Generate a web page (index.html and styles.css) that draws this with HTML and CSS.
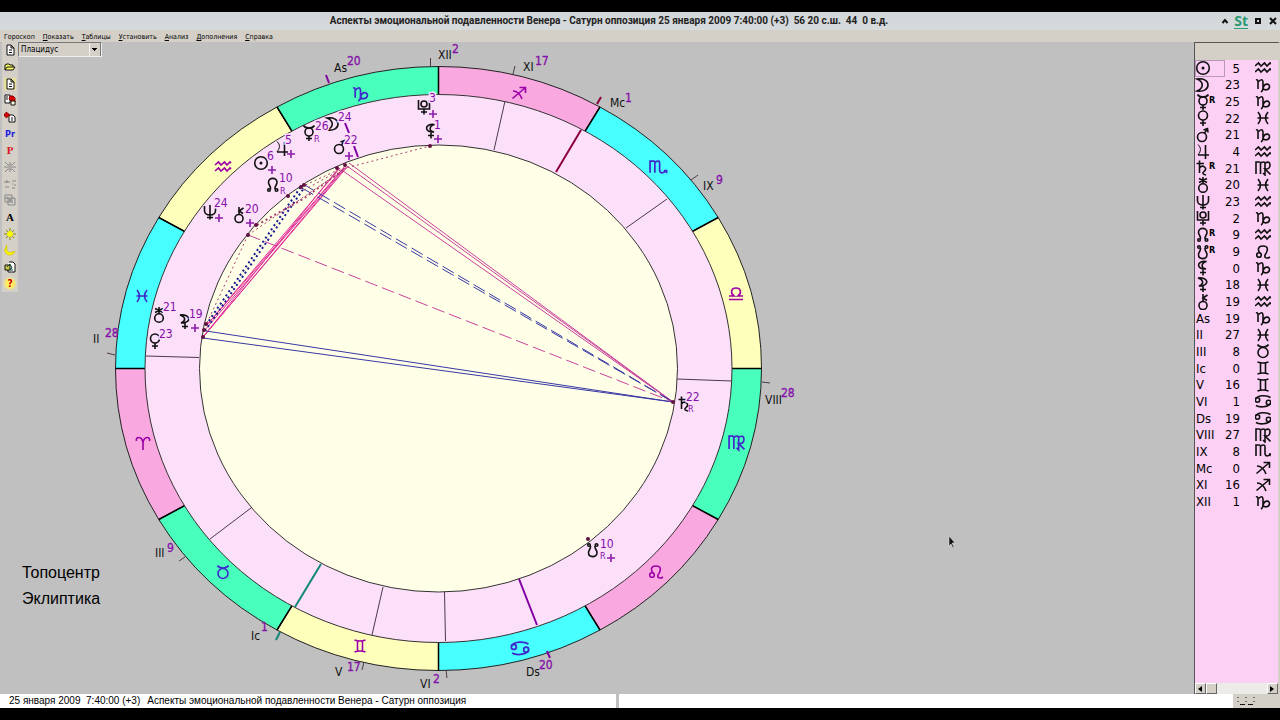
FILE: index.html
```html
<!DOCTYPE html>
<html lang="ru">
<head>
    <meta charset="UTF-8">
    <meta name="viewport" content="width=device-width, initial-scale=1.0">
    <title>Аспекты эмоциональной подавленности</title>
    <link rel="stylesheet" href="styles.css">
</head>
<body>

    <!-- glyph library -->
    <svg class="defs" width="0" height="0" aria-hidden="true">
        <symbol id="sun" viewBox="0 0 16 16"><circle cx="8" cy="8" r="6.3"/><circle cx="8" cy="8" r="0.7"/></symbol>
        <symbol id="moon" viewBox="0 0 16 16"><path d="M2 2C9 1 13 4 13 8S9 15 2 14C9 11 9 5 2 2Z"/></symbol>
        <symbol id="mercury" viewBox="0 0 16 16"><circle cx="8" cy="7" r="4"/><path d="M2.500 0.500Q4 3 8 3T13.500 0.500M8 11V16M5 13.500H11"/></symbol>
        <symbol id="venus" viewBox="0 0 16 16"><circle cx="8" cy="5.500" r="4.500"/><path d="M8 10V16M5 13H11"/></symbol>
        <symbol id="mars" viewBox="0 0 16 16"><circle cx="7" cy="10" r="4.500"/><path d="M9.500 6L12 2.500M8.500 3L12.500 1.500L13 5.500"/></symbol>
        <symbol id="jupiter" viewBox="0 0 16 16"><path class="thin" d="M3 0.500Q8 5 3 11"/><path d="M3 11H14M10.500 1V15"/></symbol>
        <symbol id="saturn" viewBox="0 0 16 16"><path d="M1.500 3.500H9M4.500 0.500V13M4.500 8Q7 5 9.500 7T9 11.500T11 15"/></symbol>
        <symbol id="uranus" viewBox="0 0 16 16"><circle cx="8" cy="11" r="4.300"/><path d="M8 7V0M4 1.500L12 5.500M12 1.500L4 5.500"/></symbol>
        <symbol id="neptune" viewBox="0 0 16 16"><path d="M2.500 2V7Q3 11 8 11T13.500 7V2M8 1V15.500M5 13.500H11"/></symbol>
        <symbol id="pluto" viewBox="0 0 16 16"><circle cx="8" cy="5" r="3"/><path d="M2.500 1V10H13.500V1M8 10V15.500M5 13H11"/></symbol>
        <symbol id="node" viewBox="0 0 16 16"><path d="M5.500 12C6 9 3.500 8 3.500 5.500C3.500 0 12 0 12 5.500C12 8 9.500 9 10 12"/><circle cx="4" cy="13" r="1.300"/><circle cx="11.500" cy="13" r="1.300"/></symbol>
        <symbol id="snode" viewBox="0 0 16 16"><path d="M5.500 4C6 7 3.500 8 3.500 10.500C3.500 16 12 16 12 10.500C12 8 9.500 7 10 4"/><circle cx="4" cy="3" r="1.300"/><circle cx="11.500" cy="3" r="1.300"/></symbol>
        <symbol id="lilith" viewBox="0 0 16 16"><path d="M11.500 1.500C1 0 1 10 11 9C5.500 8 6 3 11.500 1.500ZM8 9V15.500M5 12.500H11"/></symbol>
        <symbol id="selena" viewBox="0 0 16 16"><path d="M3 1C14 0 15 9 4 9C9 7 9 3 3 1ZM8 9V15M5 12.500H11"/></symbol>
        <symbol id="chiron" viewBox="0 0 16 16"><circle cx="8" cy="11.500" r="4"/><path d="M8 7.500V0M12.500 1L8 4L12 6.500"/></symbol>
        <symbol id="aries" viewBox="0 0 16 16"><path d="M1.500 6C0 2 7 0 8 8V15M14.500 6C16 2 9 0 8 8"/></symbol>
        <symbol id="taurus" viewBox="0 0 16 16"><circle cx="8" cy="9.500" r="5"/><path d="M2.500 1.500Q4 4 8 4T13.500 1.500"/></symbol>
        <symbol id="gemini" viewBox="0 0 16 16"><path d="M2.500 2Q8 4 13.500 2M2.500 14Q8 12 13.500 14M5.500 3V13M10.500 3V13"/></symbol>
        <symbol id="cancer" viewBox="0 0 16 16"><circle cx="2.500" cy="7" r="2.200"/><circle cx="13.500" cy="9.500" r="2.200"/><path d="M0.500 6C3 2 12 2 15.500 4.500M15.500 10.500C13 14.500 4 14.500 1 12.500"/></symbol>
        <symbol id="leo" viewBox="0 0 16 16"><circle cx="4" cy="11" r="2.300"/><path d="M5 9C3 7 2 2 8 2S13 7 10 11C9 14 12 15 15 13"/></symbol>
        <symbol id="virgo" viewBox="0 0 16 16"><path d="M1 14V2H4.500Q5.500 2 5.500 4V14M5.500 3Q7 2 9 2Q10 2 10 4V15L8 13M10 3Q15 0.500 15 5T10 9L15.500 14.500"/></symbol>
        <symbol id="libra" viewBox="0 0 16 16"><path d="M1 10H6C2 7 3 2 8 2S14 7 10 10H15M1 13.500H15"/></symbol>
        <symbol id="scorpio" viewBox="0 0 16 16"><path d="M1 13V2H4.500Q5.500 2 5.500 4V13M5.500 3Q7 2 9 2Q10 2 10 4V11Q11 15 16.500 11M14 11H16.500V13.500"/></symbol>
        <symbol id="sagittarius" viewBox="0 0 16 16"><path d="M1.500 13.500L14.500 2.500M8.500 2.500H14.500V8M2 6Q8 6 11 14"/></symbol>
        <symbol id="capricorn" viewBox="0 0 16 16"><path d="M1 3Q3 2 3 5V12M3 5Q8 0 8 6V11Q8 14 6 15M8 11C10 5 15 7 14.500 10S9 14 8 11"/></symbol>
        <symbol id="aquarius" viewBox="0 0 16 16"><path d="M0 6L3.500 3L6 6L9.500 3L12 6L15 3L16 4M0 12L3.500 9L6 12L9.500 9L12 12L15 9L16 10"/></symbol>
        <symbol id="pisces" viewBox="0 0 16 16"><path d="M3 2Q8 8 3 14M13 2Q8 8 13 14M2.500 8H13.500"/></symbol>
        <symbol id="plus" viewBox="0 0 8 8"><path d="M0 4H8M4 0V8"/></symbol>
        <symbol id="page" viewBox="0 0 12 12"><path d="M3 1H7L10 4V11H3ZM7 1V4H10M5 6H8M5 8.500H8" fill="#fff"/></symbol>
    </svg>

    <header class="titlebar">
        <h1>Аспекты эмоциональной подавленности Венера - Сатурн оппозиция 25 января 2009 7:40:00 (+3)&nbsp; 56 20 с.ш.&nbsp; 44&nbsp; 0 в.д.</h1>
        <div class="window-buttons">
            <button aria-label="Свернуть"><svg viewBox="0 0 8 8"><path d="M1.500 6L4 3L6.500 6"/></svg></button>
            <span class="brand">St</span>
            <button aria-label="Развернуть"><svg viewBox="0 0 8 8"><path d="M2 2H6V6H2Z"/></svg></button>
            <button aria-label="Закрыть"><svg viewBox="0 0 8 8"><path d="M1 1L7 7M7 1L1 7"/></svg></button>
        </div>
    </header>

    <nav class="menu">
        <a href="#">Гороскоп</a>
        <a href="#"><u>П</u>оказать</a>
        <a href="#"><u>Т</u>аблицы</a>
        <a href="#"><u>У</u>становить</a>
        <a href="#"><u>А</u>нализ</a>
        <a href="#"><u>Д</u>ополнения</a>
        <a href="#"><u>С</u>правка</a>
    </nav>

    <main class="workspace">
        <div class="toolbar">
            <button aria-label="Новый"><svg viewBox="0 0 12 12"><use href="#page"/></svg></button>
            <button aria-label="Открыть"><svg viewBox="0 0 12 12"><path d="M1 9V4L3 3H5L6 4H9V6M1 9L3 6H11L9 9Z" fill="#ff6"/></svg></button>
            <button aria-label="Изменить"><svg class="lit" viewBox="0 0 12 12"><use href="#page"/></svg></button>
            <button aria-label="Сохранить"><svg viewBox="0 0 12 12"><path d="M1 1H6V9H1ZM2 3H4M2 5H4" fill="#fff"/><path d="M6 2H9L11 4V8H8L5 5Z" fill="#d00" stroke="#800"/><path d="M7 7H11V11H7Z" fill="#ffd"/></svg></button>
            <button aria-label="Импорт"><svg viewBox="0 0 12 12"><path d="M5 4H9L11 6V11H5ZM7 7H9M7 9H9" fill="#fff"/><path d="M0 3H2V1L6 4L2 7V5H0Z" fill="#d00" stroke="#900"/></svg></button>
            <button class="progress">Pr</button>
            <button class="transit">P</button>
            <button aria-label="Аспекты" disabled><svg viewBox="0 0 12 12"><path d="M0 6H12M6 1V4M6 8V11M1 1L4 4H8L11 1M1 11L4 8H8L11 11"/></svg></button>
            <button aria-label="Ряды" disabled><svg viewBox="0 0 12 12"><path d="M0 4H6M3 2V5M1 9H5M8 3H10M11 2V4M8 6H9M11 6V8M8 10H11"/></svg></button>
            <button aria-label="Копии" disabled><svg viewBox="0 0 12 12"><path d="M1 1H8V8H1ZM4 4H11V11H4ZM3 3L9 9M4 8L8 4M1 4H4"/></svg></button>
            <button class="letter">A</button>
            <button aria-label="Солнце"><svg viewBox="0 0 12 12"><path d="M6 0V12M0 6H12M2 2L10 10M10 2L2 10" stroke="#880"/><circle cx="6" cy="6" r="2.500" fill="#ff0" stroke="#ee0"/></svg></button>
            <button aria-label="Луна"><svg viewBox="0 0 12 12"><path d="M3 1C1 9 6 10 11 7C9 13 0 12 1 5Z" fill="#ff0" stroke="#dc0"/></svg></button>
            <button aria-label="Карта"><svg viewBox="0 0 12 12"><path d="M5 1H9L11 3V11H4V4" fill="#fff"/><path d="M1 4H6V9H1Z" fill="#cc4"/><path d="M3 6L6 3L8 7L5 9M6 9H9" stroke="#143"/></svg></button>
            <button class="help">?</button>
        </div>

        <div class="stage">
            <svg class="chart" viewBox="18 42 1176 652" preserveAspectRatio="xMinYMin meet" role="img" aria-label="Карта гороскопа">
                <g transform="translate(438.500 368.500)">
                    <g class="wheel">
                        <path class="fire" d="M0 0V-302A323 302 0 0 1 161.500 -261.500Z"/>
                        <path class="water" d="M0 0L161.500 -261.500A323 302 0 0 1 279.700 -151Z"/>
                        <path class="air" d="M0 0L279.700 -151A323 302 0 0 1 323 0Z"/>
                        <path class="earth" d="M0 0H323A323 302 0 0 1 279.700 151Z"/>
                        <path class="fire" d="M0 0L279.700 151A323 302 0 0 1 161.500 261.500Z"/>
                        <path class="water" d="M0 0L161.500 261.500A323 302 0 0 1 0 302Z"/>
                        <path class="air" d="M0 0V302A323 302 0 0 1 -161.500 261.500Z"/>
                        <path class="earth" d="M0 0L-161.500 261.500A323 302 0 0 1 -279.700 151Z"/>
                        <path class="fire" d="M0 0L-279.700 151A323 302 0 0 1 -323 0Z"/>
                        <path class="water" d="M0 0H-323A323 302 0 0 1 -279.700 -151Z"/>
                        <path class="air" d="M0 0L-279.700 -151A323 302 0 0 1 -161.500 -261.500Z"/>
                        <path class="earth" d="M0 0L-161.500 -261.500A323 302 0 0 1 0 -302Z"/>
                    </g>
                    <path class="spokes" d="M0 -302V302M-323 0H323M161.500 -261.500L-161.500 261.500M-161.500 -261.500L161.500 261.500M279.700 -151L-279.700 151M-279.700 -151L279.700 151"/>
                    <ellipse class="houses" rx="293.500" ry="274"/>
                    <ellipse class="core" rx="239" ry="223.500"/>
                </g>

                <!-- house cusps -->
                <path class="cusp" d="M430.500 58V66M515 66L513 74M505 101L494 150M698 175L691 180M667 199L626 228M762 382L770 383M677 379L732 381M444.500 592L445.500 641M446 670L447 678M383 587L372 635M364 662L362 670M251 508L210 539M185 557L179 561M146 356L199 357.500M107 353L115 355"/>
                <path class="axis mc" d="M601 97L597 104M581 130L556 172"/>
                <path class="axis ic" d="M321 564L295 607M280 632L276 640"/>
                <path class="axis asc" d="M326 75L329 83M345 123L349 133M354 146L358 157M519 579L537 625M547 651L550 658"/>

                <!-- aspects -->
                <g class="aspects">
                    <path class="hard" d="M349 163L673 402M347 166L673 402M343 171L673 402"/>
                    <path class="tight" d="M338 169L203 337M346 165L206 326M344 168L204 331M348 166L203 337M340 168L206 326M345 168L204 336"/>
                    <path class="soft" d="M206 331L673 402M203 338L673 402"/>
                    <path class="soft long" d="M303 184L673 402M302 188L673 402"/>
                    <path class="hard long" d="M248 235L673 402"/>
                    <path class="soft dots" d="M206 325L300 188M205 331L304 188"/>
                    <path class="minor bold" d="M257 225L303 199L346 168"/>
                    <path class="minor" d="M248 235L206 325M301 187L338 170M304 190L344 168M248 235L346 168L430 146"/>
                </g>
                <g class="points">
                    <circle cx="430" cy="146" r="2"/><circle cx="337" cy="168" r="2"/><circle cx="345" cy="165" r="2"/>
                    <circle cx="301" cy="187" r="2"/><circle cx="304" cy="185" r="2"/><circle cx="288" cy="196" r="2"/>
                    <circle cx="256" cy="225" r="2"/><circle cx="248" cy="235" r="2"/><circle cx="206" cy="324" r="2"/>
                    <circle cx="204" cy="330" r="2"/><circle cx="203" cy="337" r="2"/><circle cx="588" cy="539" r="2"/>
                    <circle cx="673" cy="402" r="2"/>
                </g>

                <!-- zodiac signs -->
                <g class="glyphs cool">
                    <use href="#capricorn" x="352" y="85" width="17" height="17"/>
                    <use href="#scorpio" x="649" y="159" width="17" height="17"/>
                    <use href="#virgo" x="728" y="434" width="17" height="17"/>
                    <use href="#cancer" x="511" y="639" width="18" height="18"/>
                    <use href="#taurus" x="215" y="564" width="16" height="16"/>
                    <use href="#pisces" x="134" y="288" width="16" height="16"/>
                </g>
                <g class="glyphs warm">
                    <use href="#sagittarius" x="511" y="85" width="16" height="16"/>
                    <use href="#libra" x="728" y="286" width="16" height="16"/>
                    <use href="#leo" x="648" y="564" width="16" height="16"/>
                    <use href="#gemini" x="352" y="638" width="16" height="16"/>
                    <use href="#aries" x="135" y="435" width="16" height="16"/>
                    <use href="#aquarius" x="215" y="159" width="16" height="16"/>
                </g>

                <!-- planets -->
                <g class="glyphs">
                    <use href="#moon" x="325" y="116" width="16" height="16"/>
                    <use href="#mercury" x="301" y="125" width="16" height="16"/>
                    <use href="#jupiter" x="274" y="141" width="16" height="16"/>
                    <use href="#sun" x="253" y="155" width="16" height="16"/>
                    <use href="#mars" x="332" y="139" width="16" height="16"/>
                    <use href="#node" x="265" y="177" width="16" height="16"/>
                    <use href="#neptune" x="202" y="204" width="16" height="16"/>
                    <use href="#chiron" x="231" y="207" width="16" height="16"/>
                    <use href="#uranus" x="151" y="307" width="16" height="16"/>
                    <use href="#selena" x="177" y="314" width="16" height="16"/>
                    <use href="#venus" x="147" y="333" width="16" height="16"/>
                    <use href="#pluto" x="416" y="99" width="16" height="16"/>
                    <use href="#lilith" x="423" y="123" width="16" height="16"/>
                    <use href="#saturn" x="677" y="396" width="16" height="16"/>
                    <use href="#snode" x="585" y="542" width="16" height="16"/>
                </g>
                <g class="glyphs marks">
                    <use href="#plus" x="287" y="150" width="8" height="8"/>
                    <use href="#plus" x="268" y="166" width="8" height="8"/>
                    <use href="#plus" x="345" y="152" width="8" height="8"/>
                    <use href="#plus" x="215" y="214" width="8" height="8"/>
                    <use href="#plus" x="246" y="219" width="8" height="8"/>
                    <use href="#plus" x="191" y="324" width="8" height="8"/>
                    <use href="#plus" x="429" y="110" width="8" height="8"/>
                    <use href="#plus" x="434" y="135" width="8" height="8"/>
                    <use href="#plus" x="607" y="554" width="8" height="8"/>
                </g>
                <g class="degrees halo">
                    <text x="338" y="121">24</text><text x="315" y="130">26</text><text x="285" y="144">5</text>
                    <text x="267" y="160">6</text><text x="344" y="144">22</text><text x="279" y="182">10</text>
                    <text x="214" y="207">24</text><text x="245" y="213">20</text><text x="163" y="311">21</text>
                    <text x="189" y="318">19</text><text x="159" y="338">23</text><text x="429" y="102">3</text>
                    <text x="434" y="129">1</text><text x="686" y="401">22</text><text x="600" y="548">10</text>
                </g>
                <g class="retro">
                    <text x="314" y="142">R</text><text x="280" y="194">R</text>
                    <text x="688" y="412">R</text><text x="600" y="559">R</text>
                </g>
                <g class="labels">
                    <text x="334" y="72">As</text><text x="438" y="59">XII</text><text x="523" y="71">XI</text>
                    <text x="610" y="107">Mc</text><text x="703" y="190">IX</text><text x="765" y="404">VIII</text>
                    <text x="526" y="676">Ds</text><text x="420" y="688">VI</text><text x="335" y="676">V</text>
                    <text x="251" y="640">Ic</text><text x="155" y="557">III</text><text x="93" y="343">II</text>
                </g>
                <g class="degrees outer">
                    <text x="347" y="65">20</text><text x="452" y="53">2</text><text x="535" y="65">17</text>
                    <text x="625" y="102">1</text><text x="716" y="184">9</text><text x="781" y="397">28</text>
                    <text x="539" y="669">20</text><text x="433" y="683">2</text><text x="347" y="671">17</text>
                    <text x="261" y="631">1</text><text x="167" y="552">9</text><text x="105" y="337">28</text>
                </g>

                <path class="cursor" d="M949 536V546L951 544L953 548L954 547L952 543H955Z"/>
            </svg>

            <select class="system" aria-label="Система домов">
                <option>Плацидус</option>
            </select>

            <div class="notes">
                <p>Топоцентр</p>
                <p>Эклиптика</p>
            </div>
        </div>

        <aside class="positions">
            <table>
                <tr><td class="current"><svg><use href="#sun"/></svg></td><td>5</td><td><svg><use href="#aquarius"/></svg></td></tr>
                <tr><td><svg><use href="#moon"/></svg></td><td>23</td><td><svg><use href="#capricorn"/></svg></td></tr>
                <tr><td><svg><use href="#mercury"/></svg><b>R</b></td><td>25</td><td><svg><use href="#capricorn"/></svg></td></tr>
                <tr><td><svg><use href="#venus"/></svg></td><td>22</td><td><svg><use href="#pisces"/></svg></td></tr>
                <tr><td><svg><use href="#mars"/></svg></td><td>21</td><td><svg><use href="#capricorn"/></svg></td></tr>
                <tr><td><svg><use href="#jupiter"/></svg></td><td>4</td><td><svg><use href="#aquarius"/></svg></td></tr>
                <tr><td><svg><use href="#saturn"/></svg><b>R</b></td><td>21</td><td><svg><use href="#virgo"/></svg></td></tr>
                <tr><td><svg><use href="#uranus"/></svg></td><td>20</td><td><svg><use href="#pisces"/></svg></td></tr>
                <tr><td><svg><use href="#neptune"/></svg></td><td>23</td><td><svg><use href="#aquarius"/></svg></td></tr>
                <tr><td><svg><use href="#pluto"/></svg></td><td>2</td><td><svg><use href="#capricorn"/></svg></td></tr>
                <tr><td><svg><use href="#node"/></svg><b>R</b></td><td>9</td><td><svg><use href="#aquarius"/></svg></td></tr>
                <tr><td><svg><use href="#snode"/></svg><b>R</b></td><td>9</td><td><svg><use href="#leo"/></svg></td></tr>
                <tr><td><svg><use href="#lilith"/></svg></td><td>0</td><td><svg><use href="#capricorn"/></svg></td></tr>
                <tr><td><svg><use href="#selena"/></svg></td><td>18</td><td><svg><use href="#pisces"/></svg></td></tr>
                <tr><td><svg><use href="#chiron"/></svg></td><td>19</td><td><svg><use href="#aquarius"/></svg></td></tr>
                <tr><td>As</td><td>19</td><td><svg><use href="#capricorn"/></svg></td></tr>
                <tr><td>II</td><td>27</td><td><svg><use href="#pisces"/></svg></td></tr>
                <tr><td>III</td><td>8</td><td><svg><use href="#taurus"/></svg></td></tr>
                <tr><td>Ic</td><td>0</td><td><svg><use href="#gemini"/></svg></td></tr>
                <tr><td>V</td><td>16</td><td><svg><use href="#gemini"/></svg></td></tr>
                <tr><td>VI</td><td>1</td><td><svg><use href="#cancer"/></svg></td></tr>
                <tr><td>Ds</td><td>19</td><td><svg><use href="#cancer"/></svg></td></tr>
                <tr><td>VIII</td><td>27</td><td><svg><use href="#virgo"/></svg></td></tr>
                <tr><td>IX</td><td>8</td><td><svg><use href="#scorpio"/></svg></td></tr>
                <tr><td>Mc</td><td>0</td><td><svg><use href="#sagittarius"/></svg></td></tr>
                <tr><td>XI</td><td>16</td><td><svg><use href="#sagittarius"/></svg></td></tr>
                <tr><td>XII</td><td>1</td><td><svg><use href="#capricorn"/></svg></td></tr>
            </table>
            <div class="scrollbar">
                <button aria-label="Влево"><svg viewBox="0 0 8 8"><path d="M6 1V7L2 4Z"/></svg></button>
                <span class="thumb"></span>
                <button class="right" aria-label="Вправо"><svg viewBox="0 0 8 8"><path d="M2 1V7L6 4Z"/></svg></button>
            </div>
        </aside>
    </main>

    <footer class="status">
        <span>25 января 2009&nbsp; 7:40:00 (+3)</span>
        <span>Аспекты эмоциональной подавленности Венера - Сатурн оппозиция</span>
        <span class="indicator"><svg viewBox="0 0 18 10"><path d="M1 1V2M9 1V2M17 1V2M1 5V6M9 5V6M17 5V6M3 8.500H8M11 8.500H16"/></svg></span>
    </footer>

</body>
</html>
```
FILE: styles.css
```css
* {
    box-sizing: border-box;
}
body {
    margin: 0;
    height: 100vh;
    padding: 12px 0;
    display: flex;
    flex-direction: column;
    background: #000;
    font-family: "DejaVu Sans Condensed", "DejaVu Sans", sans-serif;
    color: #000;
}
button {
    padding: 0;
    border: none;
    background: none;
    font-family: inherit;
}
svg {
    display: block;
    fill: none;
    stroke: #111;
}
symbol {
    overflow: visible;
}
.defs {
    position: absolute;
}

/* title and menu */
.titlebar {
    position: relative;
    height: 18px;
    background: linear-gradient(#cfd5d8, #d8dbdc);
    display: flex;
    align-items: center;
    justify-content: center;
    flex-shrink: 0;
}
.titlebar h1 {
    margin: 0 62px 0 0;
    font: bold 10px/18px Roboto, sans-serif;
    color: #222;
    white-space: nowrap;
}
.window-buttons {
    position: absolute;
    right: 2px;
    top: 0;
    height: 18px;
    display: flex;
    align-items: center;
    gap: 4px;
}
.window-buttons button {
    width: 11px;
}
.window-buttons svg {
    width: 8px;
    height: 8px;
    margin: 0 auto;
    stroke-width: 2;
}
.brand {
    font: bold 14px/14px "Noto Sans", sans-serif;
    color: #2a9a70;
    border-bottom: 1px solid #2a9a70;
}
.menu {
    height: 12px;
    padding-left: 4px;
    background: #d4d0c8;
    display: flex;
    gap: 8px;
    flex-shrink: 0;
}
.menu a {
    font-size: 7px;
    line-height: 14px;
    color: #000;
    text-decoration: none;
}

/* workspace */
.workspace {
    flex: 1;
    min-height: 0;
    display: grid;
    grid-template-columns: 18px 1fr 86px;
    background: #c0c0c0;
}
.toolbar {
    height: 250px;
    border-left: 2px solid #c0c0c0;
    background: #d4d0c8;
    display: flex;
    flex-direction: column;
}
.toolbar button {
    flex: 1;
    display: flex;
    align-items: center;
    justify-content: center;
    font-size: 10px;
    line-height: 12px;
}
.toolbar svg {
    width: 12px;
    height: 12px;
}
.toolbar .lit {
    background: #e6e29a;
}
.toolbar button:disabled svg {
    stroke: #888;
}
.toolbar .progress {
    color: #22d;
    font-weight: bold;
    font-size: 9px;
}
.toolbar .transit,
.toolbar .letter {
    font-family: "Liberation Serif", serif;
    font-weight: bold;
    font-size: 11px;
}
.toolbar .transit {
    color: #d12;
}
.toolbar .help {
    color: #c00;
    background: radial-gradient(circle, #ffee60 4px, #d4d0c8 7px);
    font-weight: bold;
}
.stage {
    display: grid;
    min-width: 0;
    min-height: 0;
}
.stage > * {
    grid-area: 1 / 1;
}
.system {
    align-self: start;
    justify-self: start;
    width: 84px;
    height: 15px;
    padding: 0 2px;
    border: 1px solid;
    border-color: #777 #eee #eee #777;
    border-radius: 0;
    appearance: none;
    font: 8px/13px "DejaVu Sans Condensed", sans-serif;
    color: #000;
    background: linear-gradient(#000, #000) right 4px top 5px / 5px 1px no-repeat,
        linear-gradient(#000, #000) right 5px top 6px / 3px 1px no-repeat,
        linear-gradient(#000, #000) right 6px top 7px / 1px 1px no-repeat,
        linear-gradient(#777, #777) right / 1px 13px no-repeat,
        linear-gradient(#f4f4f4, #f4f4f4) right 11px top / 1px 13px no-repeat,
        #d4d0c8;
}
.notes {
    align-self: end;
    justify-self: start;
    margin: 0 0 82px 4px;
    font: 16px/26px "Liberation Sans", Arial, sans-serif;
}
.notes p {
    margin: 0;
}

/* chart */
.chart {
    width: 100%;
    height: 100%;
    overflow: hidden;
}
.wheel {
    stroke: #222;
}
.spokes {
    stroke: #000;
    stroke-width: 1.5;
}
.fire { fill: #f9a8e0; }
.water { fill: #48ffff; }
.air { fill: #ffffbc; }
.earth { fill: #48ffbc; }
.houses {
    fill: #fcdff8;
    stroke: #333;
}
.core {
    fill: #ffffe8;
    stroke: #333;
}
.cusp {
    stroke: #4c3a4c;
}
.axis {
    stroke-width: 2;
}
.mc { stroke: #8c0040; }
.ic { stroke: #108878; }
.asc { stroke: #8000a0; }
.hard {
    stroke: #c8409c;
}
.tight {
    stroke: #e02c98;
}
.soft {
    stroke: #3838a4;
}
.minor {
    stroke: #a83c70;
    stroke-dasharray: 2 3;
}
.long {
    stroke-dasharray: 13 5;
}
.dots {
    stroke: #181890;
    stroke-width: 2;
    stroke-dasharray: 2 3;
}
.bold {
    stroke-width: 2;
}
.points {
    fill: #601040;
    stroke: none;
}
.glyphs {
    stroke-width: 1.6;
}
.thin {
    stroke-width: 1;
}
.cool { stroke: #4028cc; }
.warm { stroke: #9c00a8; }
.marks { stroke: #8c1cac; }
.chart text {
    stroke: none;
}
.degrees {
    font-size: 12px;
    fill: #8410a8;
}
.chart .halo text {
    stroke: #fcdff8;
    stroke-width: 3;
    paint-order: stroke;
}
.chart .outer text {
    stroke: #8410a8;
    stroke-width: 0.3;
}
.retro {
    font-size: 9px;
    fill: #8410a8;
}
.labels {
    font-size: 12px;
    fill: #111;
}
.cursor {
    fill: #111;
    stroke: #eee;
    stroke-width: 0.5;
}

/* positions panel */
.positions {
    border: solid #555;
    border-width: 1px 0 0 1px;
    border-right: 2px solid #d4d0c8;
    padding-top: 17px;
    background: linear-gradient(#d4d0c8 17px, #fcd0f4 17px);
    display: flex;
    flex-direction: column;
    justify-content: space-between;
}
.positions table {
    width: 100%;
    height: 450px;
    table-layout: fixed;
    border-collapse: collapse;
}
.positions td {
    padding: 0;
    font-size: 13px;
    line-height: 15px;
    height: 16px;
    white-space: nowrap;
}
.positions td:first-child {
    width: 30px;
    padding-left: 1px;
}
.positions td:nth-child(2) {
    width: 15px;
    text-align: right;
}
.positions td:last-child {
    padding-left: 15px;
}
.positions td svg {
    width: 16px;
    height: 16px;
    display: inline-block;
    vertical-align: top;
    stroke-width: 1.6;
}
.positions td:first-child svg {
    margin-left: -1px;
}
.positions td b {
    display: inline-block;
    font-size: 9px;
    line-height: 13px;
    margin-left: -2px;
    vertical-align: top;
}
.positions .current {
    outline: 1px solid #b898b8;
    outline-offset: -1px;
}
.scrollbar {
    height: 11px;
    background: #ecebe8;
    display: flex;
}
.scrollbar button,
.thumb {
    width: 11px;
    background: #d4d0c8;
    border: 1px solid;
    border-color: #fff #666 #666 #fff;
}
.scrollbar svg {
    width: 8px;
    height: 8px;
    fill: #000;
    stroke: none;
}
.scrollbar .right {
    margin-left: auto;
}

/* status bar */
.status {
    height: 14px;
    flex-shrink: 0;
    padding-left: 9px;
    background: linear-gradient(#c0c0c0, #c0c0c0) 48.2% 0 / 3px 100% no-repeat, #fff;
    display: flex;
    gap: 7px;
    font: 10px/13px "Liberation Sans", Arial, sans-serif;
    white-space: nowrap;
}
.indicator {
    width: 47px;
    margin-left: auto;
    padding: 2px 4px;
    background: #d4d0c8;
}
.indicator svg {
    width: 18px;
    height: 10px;
}
```
